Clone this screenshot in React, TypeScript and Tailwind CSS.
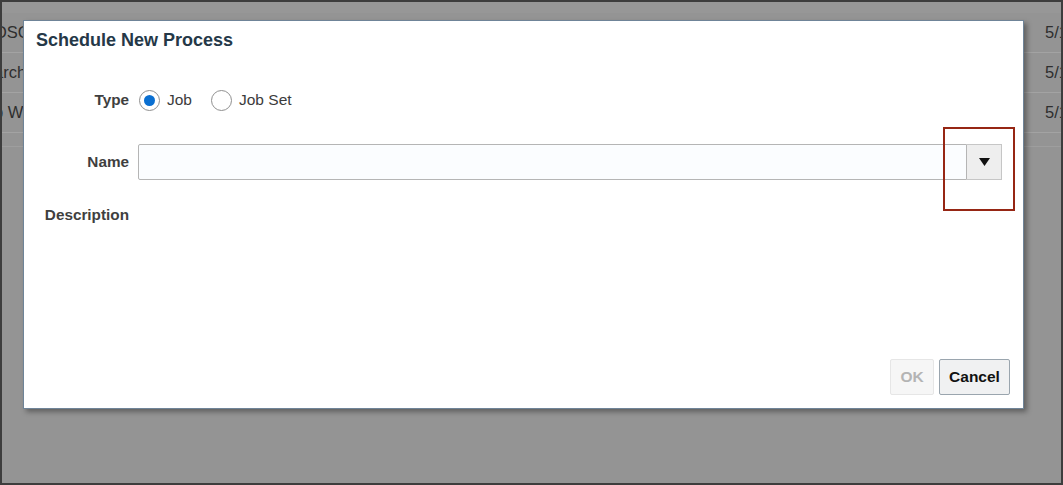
import React from 'react'

const rows = [
    { left: 'OSC', right: '5/1' },
    { left: 'arch', right: '5/1' },
    { left: 'p W', right: '5/1' },
]

function Radio({ checked, label }: { checked?: boolean; label: string }) {
    return (
        <label className="flex items-center gap-[7px]">
            <span className="flex h-[21px] w-[21px] items-center justify-center rounded-full border border-[#8f8f8f] bg-white">
                {checked && <span className="h-[11px] w-[11px] rounded-full bg-[#0a6fd1]" />}
            </span>
            <span className="text-[15.5px] text-[#3b3b3b]">{label}</span>
        </label>
    )
}

export default function App() {
    return (
        <div className="relative h-[485px] w-[1063px] overflow-hidden border-2 border-[#3d3d3d] bg-[#949494] font-['Liberation_Sans',Arial,sans-serif]">
            {/* page behind the overlay */}
            <div className="h-[11px] bg-[#979797]" />
            {rows.map((r) => (
                <div key={r.left} className="flex h-[40px] items-center justify-between border-b border-[#a3a3a3] text-[16.5px] text-[#2e2e2e]">
                    <span className="-ml-[8px]">{r.left}</span>
                    <span className="mr-[-6px] w-[22px] overflow-hidden whitespace-nowrap">{r.right}</span>
                </div>
            ))}
            <div className="h-[14px] border-b border-[#9e9e9e]" />

            {/* dialog */}
            <div className="absolute left-[21px] top-[18px] flex h-[389px] w-[1001px] flex-col border border-[#6f8498] bg-white shadow-[3px_3px_5px_rgba(0,0,0,0.35)]">
                <h1 className="pl-[12px] pt-[8px] text-[18px] font-bold leading-[22px] text-[#253848]">Schedule New Process</h1>

                <div className="mt-[37px] grid grid-cols-[105px_1fr] items-center gap-x-[9px] text-[15.3px] font-bold text-[#3f3f3f]">
                    <span className="text-right leading-[24px]">Type</span>
                    <div className="flex h-[24px] items-center gap-[19px] font-normal">
                        <div className="ml-[1px]"><Radio checked label="Job" /></div>
                        <Radio label="Job Set" />
                    </div>

                    <span className="mt-[32px] text-right">Name</span>
                    <div className="mt-[32px] flex h-[36px] pr-[21px]">
                        <div className="flex-1 rounded-l-[2px] border border-[#b5b5b5] bg-[#fbfdff]" />
                        <button className="flex w-[35px] items-center justify-center border border-l-0 border-[#c6c6c6] bg-[#eeeeee]">
                            <svg width="11" height="8" viewBox="0 0 11 8">
                                <path d="M0 0 H11 L5.5 8 Z" fill="#111" />
                            </svg>
                        </button>
                    </div>

                    <span className="mt-[25px] text-right leading-[20px]">Description</span>
                    <span className="mt-[25px]" />
                </div>

                <div className="mt-auto flex justify-end gap-[5px] pb-[13px] pr-[13px]">
                    <button className="h-[36px] w-[44px] rounded-[2px] border border-[#e6e6e6] bg-[#f6f6f6] text-[15.5px] font-bold text-[#b4b4b4]">OK</button>
                    <button className="h-[36px] w-[71px] rounded-[2px] border border-[#9aa5ae] bg-[#f0f1f2] text-[15.5px] font-bold text-[#111]">Cancel</button>
                </div>
            </div>

            {/* highlight annotation */}
            <div className="absolute left-[941px] top-[125px] h-[84px] w-[72px] border-[2.5px] border-[#962614]" />
        </div>
    )
}
